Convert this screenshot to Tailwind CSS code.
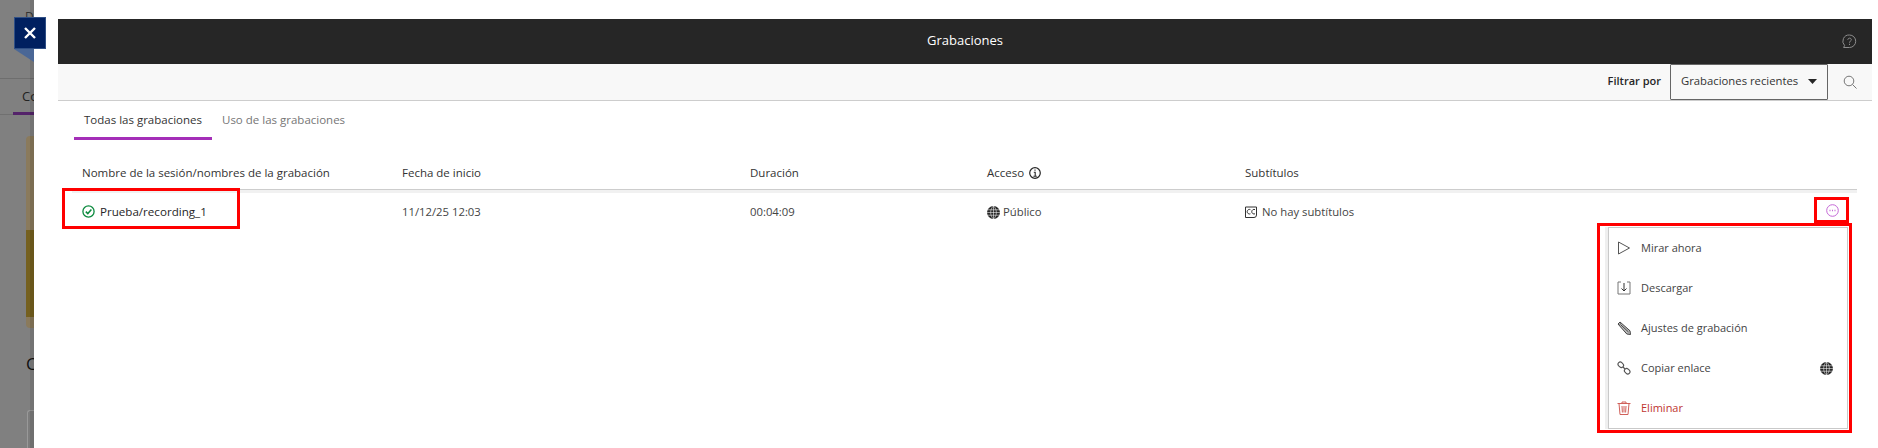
<!DOCTYPE html>
<html lang="es">
<head>
  <meta charset="UTF-8" />
  <title>Grabaciones</title>
  <script src="https://cdn.jsdelivr.net/npm/@tailwindcss/browser@4"></script>
</head>
<body class="bg-white font-['Open_Sans',sans-serif] text-[#262626] overflow-hidden">
<div class="relative flex w-[1878px] h-[448px] overflow-hidden">

  <!-- pagina de fondo -->
  <div class="relative w-[34px] shrink-0 bg-[#808080] overflow-hidden">
    <div class="absolute left-[25px] top-[8px] text-[12px] text-[#333]">DE</div>
    <div class="absolute left-0 top-[78px] w-full h-[37px] border-t border-[#6e6e6e] border-b border-b-[#707070]"></div>
    <div class="absolute left-[22px] top-[87px] text-[13px] text-[#222]">Co</div>
    <div class="absolute left-[13px] top-[112px] w-[21px] h-[3px] bg-[#54236a]"></div>
    <div class="absolute left-[26px] top-[136px] w-[8px] h-[192px] bg-[#8a7a5c] rounded-tl-[4px] rounded-bl-[4px]">
      <div class="mt-[94px] h-[87px] bg-[#75601f]"></div>
    </div>
    <div class="absolute left-[26px] top-[352px] text-[17px] leading-[24px] text-[#111]">C</div>
    <div class="absolute left-[27px] top-[410px] w-[7px] h-[38px] border-l border-t border-[#999] bg-[#7c7c7c] rounded-tl-[3px]"></div>
    <div class="absolute right-0 top-0 w-[4px] h-full bg-black/10"></div>
  </div>

  <!-- boton cerrar -->
  <div class="absolute left-[14px] top-[17px] w-[32px] h-[32px] bg-[#002060] border border-[#2f4f85] flex items-center justify-center">
    <svg width="14" height="14" viewBox="0 0 14 14"><path d="M2 2l10 10M12 2L2 12" stroke="#fff" stroke-width="2.4"/></svg>
  </div>
  <svg class="absolute left-[14px] top-[49px]" width="20" height="13" viewBox="0 0 20 13"><path d="M0 0h20v13z" fill="#4a6796"/></svg>

  <!-- panel -->
  <div class="flex-1 bg-white pl-[24px] pr-[6px] pt-[19px]">
    <div class="relative h-[45px] pb-[2px] bg-[#262626] flex items-center justify-center text-white text-[13px]">
      Grabaciones
      <svg class="absolute right-[15px] top-[15px]" width="15" height="15" viewBox="0 0 15 15" fill="none" stroke="#8c8c8c"><path d="M7.500 1a6.200 6.200 0 0 1 6.200 6.300 6.200 6.200 0 0 1-6.200 6.200H1.600l1-2A6.200 6.200 0 0 1 7.500 1z"/><path d="M5.800 5.800c0-2.200 3.500-2.200 3.500-.1 0 1.500-1.800 1.400-1.800 3M7.500 9.800v1.200"/></svg>
    </div>
    <div class="h-[37px] bg-[#f8f8f8] border-b border-[#cdcdcd] flex items-center justify-end">
      <span class="text-[11px] font-semibold mr-[9px] mb-[2px]">Filtrar por</span>
      <div class="h-[36px] w-[158px] mt-[-1px] border border-[#666] rounded-[1px] flex items-center pl-[10px] pr-[10px] text-[11.3px] text-[#333] justify-between">
        Grabaciones recientes
        <svg width="9" height="5" viewBox="0 0 9 5"><path d="M0 0h9L4.500 5z" fill="#262626"/></svg>
      </div>
      <div class="w-[44px] flex justify-center pb-[1px] pr-[1px]">
        <svg width="14" height="14" viewBox="0 0 14 14" fill="none" stroke="#777"><circle cx="6" cy="6" r="4.800"/><path d="M9.500 9.500l4 4"/></svg>
      </div>
    </div>

    <div class="flex ml-[16px] h-[39px] text-[11.5px]">
      <div class="w-[138px] pl-[10px] pt-[10px] border-b-[3px] border-[#a42fb8] text-[#333] whitespace-nowrap">Todas las grabaciones</div>
      <div class="pl-[10px] pt-[10px] text-[#767676] whitespace-nowrap">Uso de las grabaciones</div>
    </div>

    <div class="ml-[14px] mr-[15px] mt-[17px] pl-[10px] h-[33px] border-b border-[#cdcdcd] grid grid-cols-[320px_348px_237px_258px_1fr] items-center text-[11.5px] text-[#333]">
      <div>Nombre de la sesión/nombres de la grabación</div>
      <div>Fecha de inicio</div>
      <div>Duración</div>
      <div class="flex items-center gap-[5px]">Acceso
        <svg width="12" height="12" viewBox="0 0 12 12" fill="none" stroke="#262626" stroke-width="1.200"><circle cx="6" cy="6" r="5.300"/><path d="M6 2.600v1.200M4.800 5.200H6.200V9M4.400 9.200h3.400" stroke-width="1.100"/></svg>
      </div>
      <div>Subtítulos</div>
    </div>
    <div class="ml-[14px] mr-[15px] h-[3px] bg-[#f1f1f1]"></div>
    <div class="ml-[14px] mr-[15px] pl-[10px] h-[38px] grid grid-cols-[320px_348px_237px_258px_1fr] items-center text-[11.3px] text-[#444]">
      <div class="flex items-center gap-[5px] text-[11.6px] text-[#262626]">
        <svg width="13" height="13" viewBox="0 0 13 13" fill="none" stroke="#0b8a3e" stroke-width="1.300"><circle cx="6.500" cy="6.500" r="5.600"/><path d="M3.800 6.600l2 2 3.600-4" stroke-width="1.500"/></svg>
        Prueba/recording_1
      </div>
      <div>11/12/25 12:03</div>
      <div>00:04:09</div>
      <div class="flex items-center gap-[3px]">
        <svg width="13" height="13" viewBox="0 0 12 12" fill="#262626"><circle cx="6" cy="6" r="6"/><path d="M0 6h12M0 3.500h12M0 8.500h12M6 0v12M6 0C2.500 3 2.500 9 6 12M6 0c3.500 3 3.500 9 0 12" stroke="#fff" stroke-width=".5" fill="none"/></svg>
        Público
      </div>
      <div class="flex items-center gap-[5px]">
        <svg width="12" height="12" viewBox="0 0 12 12" fill="none" stroke="#333"><path d="M.5 1h11v8a2.500 2.500 0 0 1-2.500 2.500H.5z"/><path d="M5.400 3.600a2.300 2.300 0 1 0 0 4.200M10 3.600a2.300 2.300 0 1 0 0 4.200"/></svg>
        No hay subtítulos
      </div>
    </div>
  </div>

  <!-- boton de acciones -->
  <svg class="absolute left-[1826px] top-[204px]" width="13" height="13" viewBox="0 0 13 13" fill="none" stroke="#c468d6"><circle cx="6.500" cy="6.500" r="5.800"/><path d="M3.500 6.500h1M6 6.500h1M8.500 6.500h1" stroke-width="1.300"/></svg>

  <!-- menu -->
  <div class="absolute left-[1605px] top-[227px] w-[243px] h-[202px] bg-white border-l-[3px] border-[#efefef]">
    <div class="h-full border border-[#c9c9c9] text-[11px] text-[#444] flex flex-col justify-center">
      <div class="h-[40px] flex items-center pl-[8px]">
        <svg class="mr-[10px]" width="14" height="14" viewBox="0 0 14 14" fill="none" stroke="#555"><path d="M1.500 1l11 6-11 6z"/></svg>
        Mirar ahora
      </div>
      <div class="h-[40px] flex items-center pl-[8px]">
        <svg class="mr-[10px]" width="14" height="14" viewBox="0 0 14 14" fill="none" stroke="#777"><path d="M4 1H1v12h12V1h-3"/><path d="M7 2v8M4.500 7.500L7 10l2.500-2.500" stroke="#333"/></svg>
        Descargar
      </div>
      <div class="h-[40px] flex items-center pl-[8px]">
        <svg class="mr-[10px]" width="14" height="14" viewBox="0 0 14 14" fill="#bbb" stroke="#444"><path d="M3 1l10 8.800.5 3.700-3.700-.5L1 3z"/><path d="M2.500 3.800L4 2.500M4 4l7.500 7"/></svg>
        Ajustes de grabación
      </div>
      <div class="h-[40px] flex items-center pl-[8px] pr-[14px]">
        <svg class="mr-[10px]" width="14" height="14" viewBox="0 0 14 14" fill="none" stroke="#555" stroke-width="1.100"><rect x="-3" y="-2.200" width="6" height="4.400" rx="2.200" transform="translate(3.800 3.800) rotate(45)"/><rect x="-3" y="-2.200" width="6" height="4.400" rx="2.200" transform="translate(10.200 10.200) rotate(45)"/><path d="M6 6l2 2"/></svg>
        Copiar enlace
        <svg class="ml-auto" width="13" height="13" viewBox="0 0 12 12" fill="#262626"><circle cx="6" cy="6" r="6"/><path d="M0 6h12M0 3.500h12M0 8.500h12M6 0v12M6 0C2.500 3 2.500 9 6 12M6 0c3.500 3 3.500 9 0 12" stroke="#fff" stroke-width=".5" fill="none"/></svg>
      </div>
      <div class="h-[40px] flex items-center pl-[8px] text-[#c0352f]">
        <svg class="mr-[10px]" width="14" height="14" viewBox="0 0 14 14" fill="none" stroke="#d0605a"><path d="M.5 2.500h13M5 2.500V1h4v1.500M2 2.500l1 11h8l1-11M5 5l.4 6.500M7 5v6.500M9 5l-.4 6.500"/></svg>
        Eliminar
      </div>
    </div>
  </div>

  <!-- recuadros rojos -->
  <div class="absolute left-[62px] top-[188px] w-[178px] h-[41px] border-[3px] border-[#ff0000]"></div>
  <div class="absolute left-[1814px] top-[197px] w-[35px] h-[26px] border-[3px] border-[#ff0000]"></div>
  <div class="absolute left-[1597px] top-[223px] w-[255px] h-[210px] border-[3px] border-[#ff0000]"></div>
</div>
</body>
</html>
